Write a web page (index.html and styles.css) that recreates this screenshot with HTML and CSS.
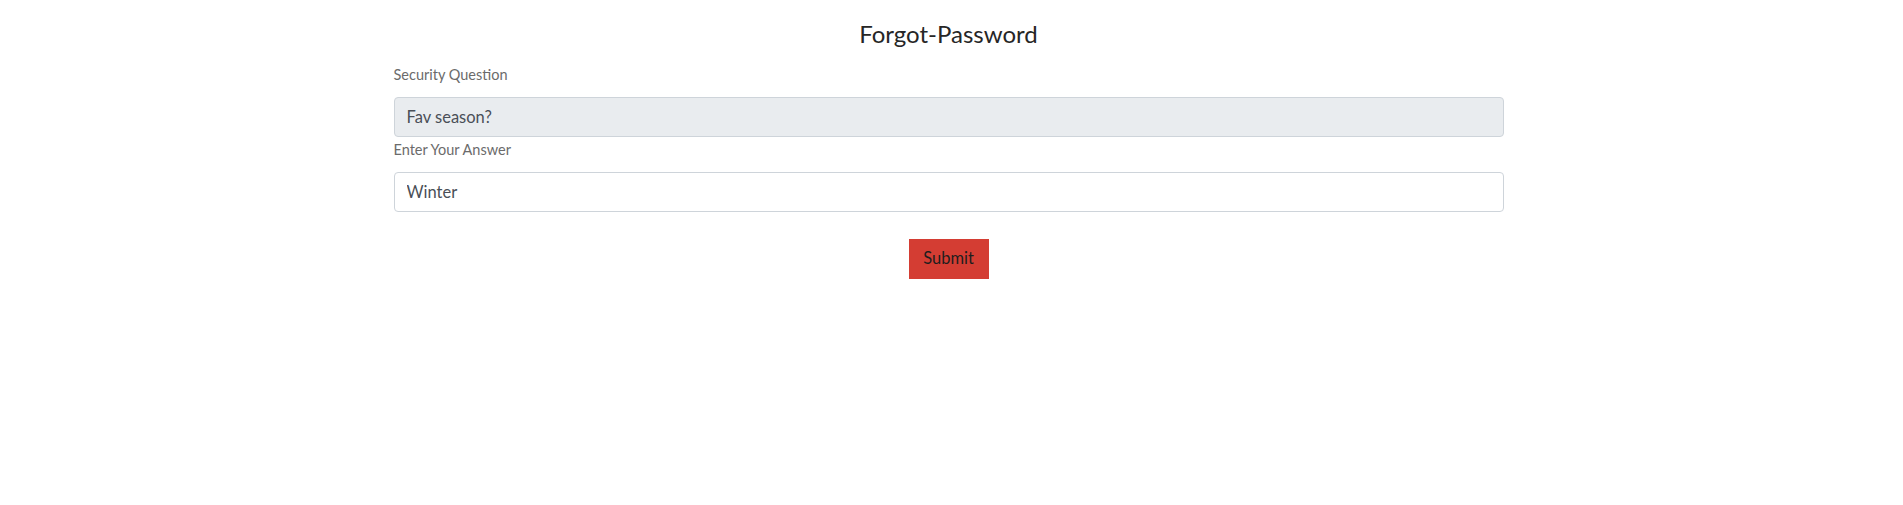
FILE: index.html
```html
<!DOCTYPE html>
<html lang="en">
<head>
<meta charset="utf-8">
<title>Forgot-Password</title>
<link rel="stylesheet" href="styles.css">
</head>
<body>
<main class="page">
  <h2 class="title">Forgot-Password</h2>
  <form class="form">
    <div class="field">
      <label class="label" for="q">Security Question</label>
      <input id="q" class="input input-disabled" type="text" value="Fav season?" disabled>
    </div>
    <div class="field">
      <label class="label" for="a">Enter Your Answer</label>
      <input id="a" class="input" type="text" value="Winter">
    </div>
    <div class="actions">
      <button type="button" class="btn">Submit</button>
    </div>
  </form>
</main>
</body>
</html>
```
FILE: styles.css
```css
html, body {
  margin: 0;
  padding: 0;
  background: #ffffff;
}
body {
  font-family: Lato, "Open Sans", "Liberation Sans", sans-serif;
  color: #181818;
}
.page {
  width: 1110px;
  margin-left: calc(50% - 558px);
  display: flex;
  flex-direction: column;
}
.title {
  margin: 19px 0 0;
  font-size: 24px;
  font-weight: 400;
  line-height: 29px;
  text-align: center;
  color: #262626;
}
.form {
  display: flex;
  flex-direction: column;
  margin-top: 15px;
}
.field {
  display: flex;
  flex-direction: column;
}
.field + .field {
  margin-top: 1px;
}
.label {
  font-size: 14.5px;
  line-height: 20px;
  color: #6b6b6b;
  padding-top: 2px;
  margin-bottom: 12px;
}
.input {
  box-sizing: border-box;
  height: 40px;
  width: 100%;
  padding: 0 12px;
  border: 1px solid #ced4da;
  border-radius: 4px;
  font-family: inherit;
  font-size: 16.5px;
  color: #4a4f57;
  background: #ffffff;
  outline: none;
}
.input-disabled {
  background: #e9ecef;
  color: #4a4f57;
  -webkit-text-fill-color: #4a4f57;
  opacity: 1;
}
.actions {
  display: flex;
  justify-content: center;
  margin-top: 27px;
}
.btn {
  width: 80px;
  height: 40px;
  border: none;
  border-radius: 0;
  background: #d43d33;
  color: #1e1e1e;
  font-family: inherit;
  font-size: 16.5px;
  line-height: 20px;
  padding: 0 0 3px;
  cursor: pointer;
}
```
